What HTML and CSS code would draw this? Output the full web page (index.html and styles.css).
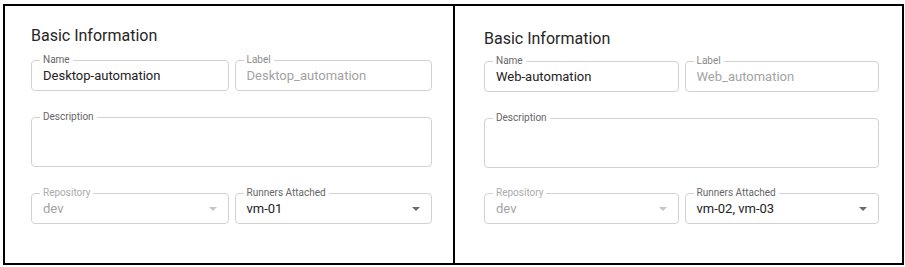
FILE: index.html
```html
<!DOCTYPE html>
<html>
<head>
    <title>Basic Information</title>
    <link rel="stylesheet" href="styles.css">
</head>
<body>
    <div class="frame">
        <div class="panel panel-left">
            <h2>Basic Information</h2>
            <div class="row">
                <fieldset class="field">
                    <legend>Name</legend>
                    <input type="text" value="Desktop-automation">
                </fieldset>
                <fieldset class="field disabled">
                    <legend>Label</legend>
                    <input type="text" value="Desktop_automation" disabled>
                </fieldset>
            </div>
            <fieldset class="field field-tall">
                <legend>Description</legend>
                <textarea></textarea>
            </fieldset>
            <div class="row row-bottom">
                <fieldset class="field disabled">
                    <legend>Repository</legend>
                    <div class="select">
                        <span class="value">dev</span>
                        <span class="arrow"></span>
                    </div>
                </fieldset>
                <fieldset class="field">
                    <legend>Runners Attached</legend>
                    <div class="select">
                        <span class="value">vm-01</span>
                        <span class="arrow"></span>
                    </div>
                </fieldset>
            </div>
        </div>

        <div class="panel panel-right">
            <h2>Basic Information</h2>
            <div class="row">
                <fieldset class="field">
                    <legend>Name</legend>
                    <input type="text" value="Web-automation">
                </fieldset>
                <fieldset class="field disabled">
                    <legend>Label</legend>
                    <input type="text" value="Web_automation" disabled>
                </fieldset>
            </div>
            <fieldset class="field field-tall">
                <legend>Description</legend>
                <textarea></textarea>
            </fieldset>
            <div class="row row-bottom">
                <fieldset class="field disabled">
                    <legend>Repository</legend>
                    <div class="select">
                        <span class="value">dev</span>
                        <span class="arrow"></span>
                    </div>
                </fieldset>
                <fieldset class="field">
                    <legend>Runners Attached</legend>
                    <div class="select">
                        <span class="value">vm-02, vm-03</span>
                        <span class="arrow"></span>
                    </div>
                </fieldset>
            </div>
        </div>
    </div>
</body>
</html>
```

FILE: styles.css
```css
body {
    margin: 0;
    padding: 0;
    font-family: Roboto, "Liberation Sans", sans-serif;
    background-color: #fff;
}

.frame {
    display: flex;
    width: 897px;
    height: 257px;
    margin: 4px 0 0 3px;
    border: 2px solid #000;
}

.panel {
    box-sizing: border-box;
    background-color: #fff;
}

.panel-left {
    width: 450px;
    padding: 20px 21px 0 26px;
    border-right: 2px solid #000;
}

.panel-right {
    width: 447px;
    padding: 23px 23px 0 29px;
}

h2 {
    margin: 0 0 8px;
    font-size: 16px;
    line-height: 20px;
    font-weight: 400;
    color: #262626;
}

.panel-right h2 {
    margin-bottom: 6px;
}

.row {
    display: grid;
    grid-template-columns: 1fr 1fr;
    column-gap: 6px;
}

.field {
    margin: 0;
    padding: 0 11px 4px;
    min-width: 0;
    border: 1px solid #d2d2d2;
    border-radius: 4px;
}

.field legend {
    margin-left: -3px;
    padding: 0 3px;
    font-size: 10px;
    line-height: 12px;
    color: #666;
}

.field input,
.field textarea,
.select {
    display: block;
    box-sizing: border-box;
    width: 100%;
    height: 20px;
    margin: 0;
    padding: 0;
    border: 0;
    outline: none;
    background: transparent;
    font-family: inherit;
    font-size: 13px;
    line-height: 20px;
    color: #222;
}

.field-tall {
    margin-top: 20px;
}

.field-tall textarea {
    height: 39px;
    resize: none;
}

.row-bottom {
    margin-top: 20px;
}

.panel-right .row-bottom {
    margin-top: 19px;
}

.select {
    display: flex;
    align-items: center;
    justify-content: space-between;
}

.arrow {
    width: 0;
    height: 0;
    border-left: 4px solid transparent;
    border-right: 4px solid transparent;
    border-top: 4px solid #6b6b6b;
}

.disabled legend {
    color: #8a8a8a;
}

.disabled input,
.disabled .value {
    color: #a3a3a3;
}

.disabled .arrow {
    border-top-color: #c6c6c6;
}

.row-bottom .disabled legend {
    color: #ababab;
}
```
